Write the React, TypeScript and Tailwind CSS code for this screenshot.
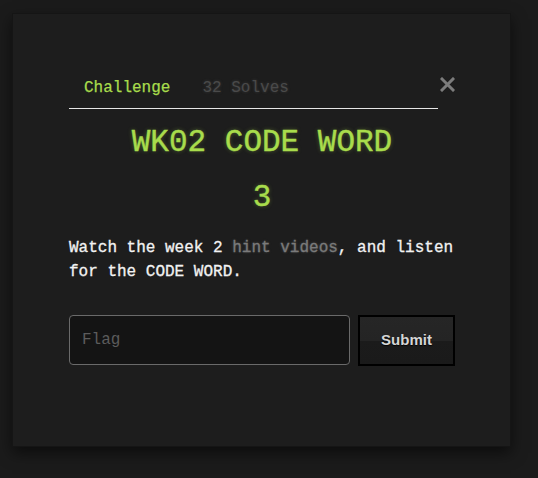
import React, { useState } from 'react';

const mono = "font-['Liberation_Mono','DejaVu_Sans_Mono',monospace]";

export default function App() {
  const [tab, setTab] = useState<'challenge' | 'solves'>('challenge');
  const [flag, setFlag] = useState('');

  return (
    <div className="w-[538px] h-[478px] bg-[#1b1b1b] overflow-hidden pt-[13px] pl-[12px]">
      {/* Modal */}
      <div className={`w-[499px] h-[434px] bg-[#1d1d1d] border border-[#151515] shadow-[0_6px_14px_rgba(0,0,0,0.55)] pt-[54px] pl-[56px] pr-[55px] ${mono}`}>
        {/* Tabs + close */}
        <div className="flex items-start">
          <ul className="flex flex-1 border-b border-[#e6e6e6]">
            <li>
              <button
                onClick={() => setTab('challenge')}
                className={`block pl-[15px] pr-4 py-2 text-base leading-6 [-webkit-text-stroke:0.25px_currentColor] ${tab === 'challenge' ? 'text-[#a8dc4c]' : 'text-[#4a4a4a]'}`}
              >
                Challenge
              </button>
            </li>
            <li>
              <button
                onClick={() => setTab('solves')}
                className={`block px-4 py-2 text-base leading-6 ${tab === 'solves' ? 'text-[#a8dc4c]' : 'text-[#4a4a4a] [text-shadow:0_0_3px_rgba(120,120,120,0.35)]'}`}
              >
                32 Solves
              </button>
            </li>
          </ul>
          <button className="mt-[9px] ml-[2px] w-[15px] h-[15px] text-[#7c7c7c]" aria-label="Close">
            <svg viewBox="0 0 15 15" width="15" height="15">
              <path d="M2 2 L13 13 M13 2 L2 13" stroke="currentColor" strokeWidth="3" strokeLinecap="square" />
            </svg>
          </button>
        </div>

        {/* Title */}
        <h2 className="mt-[16px] text-center text-[31px] leading-9 text-[#a8dc4c] [-webkit-text-stroke:0.4px_currentColor] [text-shadow:0_0_4px_rgba(168,220,76,0.35)]">
          WK02 CODE WORD
        </h2>
        <h3 className="mt-[19px] text-center text-[31px] leading-9 text-[#a8dc4c] [-webkit-text-stroke:0.4px_currentColor] [text-shadow:0_0_4px_rgba(168,220,76,0.35)]">
          3
        </h3>

        {/* Description */}
        <p className="mt-[20px] text-base leading-6 text-[#f2f2f2] [-webkit-text-stroke:0.3px_currentColor]">
          Watch the week 2{' '}
          <a href="#" className="text-[#7a7a7a] [text-shadow:0_0_3px_rgba(140,140,140,0.4)]">hint videos</a>
          , and listen for the CODE WORD.
        </p>

        {/* Flag form */}
        <div className="mt-[31px] flex items-start w-[386px]">
          <input
            value={flag}
            onChange={e => setFlag(e.target.value)}
            placeholder="Flag"
            className={`w-[281px] h-[50px] rounded-[4px] border border-[#6a6a6a] bg-[#141414] px-3 text-base text-[#ddd] placeholder:text-[#5c5c5c] outline-none ${mono}`}
          />
          <button className="ml-[8px] w-[97px] h-[51px] border-2 border-black bg-[linear-gradient(to_bottom,#262626_0%,#242424_50%,#1b1b1b_50%,#1a1a1a_100%)] font-['Liberation_Sans',Arial,sans-serif] font-bold text-[15px] text-[#d6d6d6] [text-shadow:0_1px_1px_rgba(0,0,0,0.9)]">
            Submit
          </button>
        </div>
      </div>
    </div>
  );
}
